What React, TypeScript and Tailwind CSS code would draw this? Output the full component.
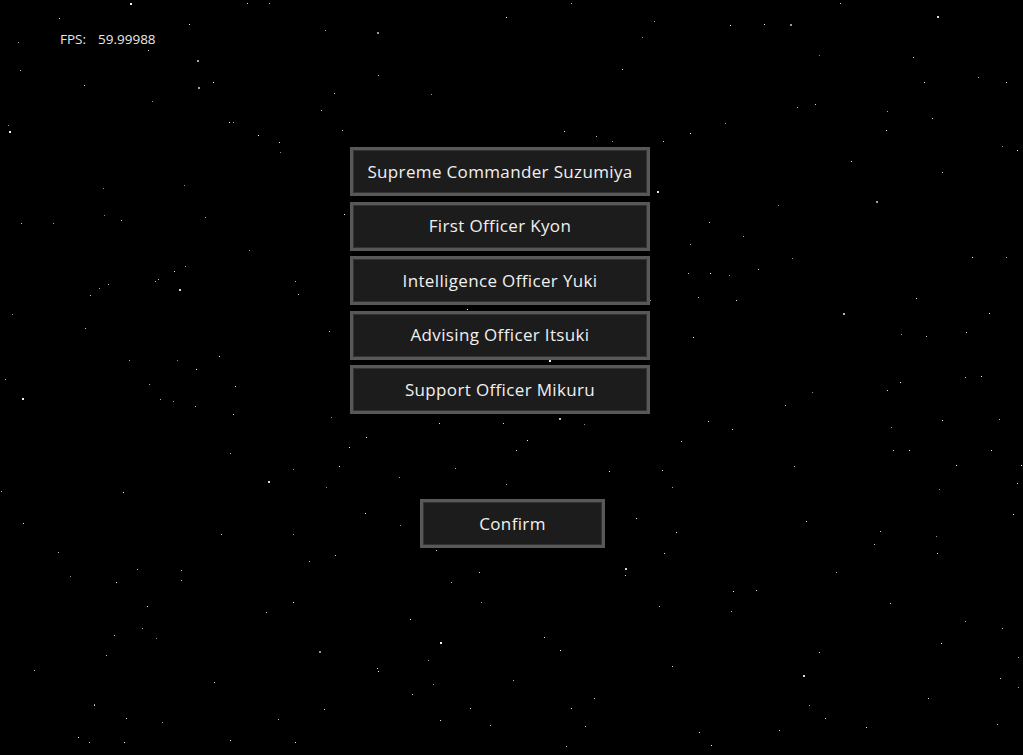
import React from "react";

function makeStars() {
  let s = 1234567;
  const rnd = () => {
    s = (s * 1103515245 + 12345) % 2147483648;
    return s / 2147483648;
  };
  const stars: { x: number; y: number; r: number; o: number }[] = [];
  for (let i = 0; i < 280; i++) {
    const x = Math.floor(rnd() * 1023);
    const y = Math.floor(rnd() * 755);
    const big = rnd() < 0.08;
    stars.push({ x, y, r: big ? 2 : 1, o: 0.55 + rnd() * 0.45 });
  }
  return stars;
}

const STARS = makeStars();

const officers = [
  "Supreme Commander Suzumiya",
  "First Officer Kyon",
  "Intelligence Officer Yuki",
  "Advising Officer Itsuki",
  "Support Officer Mikuru",
];

function GameButton({ label, width }: { label: string; width: string }) {
  return (
    <div
      className={`${width} h-[49px] border-[3px] border-[#585858] bg-[#1c1c1c] shadow-[inset_0_0_0_1px_#333333] flex items-center justify-center text-[#f0f0f0] text-[17px] tracking-[0.35px]`}
    >
      {label}
    </div>
  );
}

export default function App() {
  return (
    <div
      className="relative w-[1023px] h-[755px] bg-black overflow-hidden"
      style={{ fontFamily: '"Open Sans", "Noto Sans", sans-serif' }}
    >
      <svg className="absolute inset-0" width="1023" height="755">
        {STARS.map((st, i) => (
          <rect key={i} x={st.x} y={st.y} width={st.r} height={st.r} fill="#ffffff" opacity={st.o} />
        ))}
      </svg>
      <div className="relative flex flex-col">
        <div className="pl-[60px] pt-[30px] flex text-[13.5px] leading-[18px] text-[#e8e8e8]">
          <span className="w-[38px]">FPS:</span>
          <span>59.99988</span>
        </div>
        <div className="mt-[99px] pl-[350px] flex flex-col gap-[5.5px]">
          {officers.map((o) => (
            <GameButton key={o} label={o} width="w-[300px]" />
          ))}
        </div>
        <div className="mt-[85px] pl-[420px]">
          <GameButton label="Confirm" width="w-[185px]" />
        </div>
      </div>
    </div>
  );
}
